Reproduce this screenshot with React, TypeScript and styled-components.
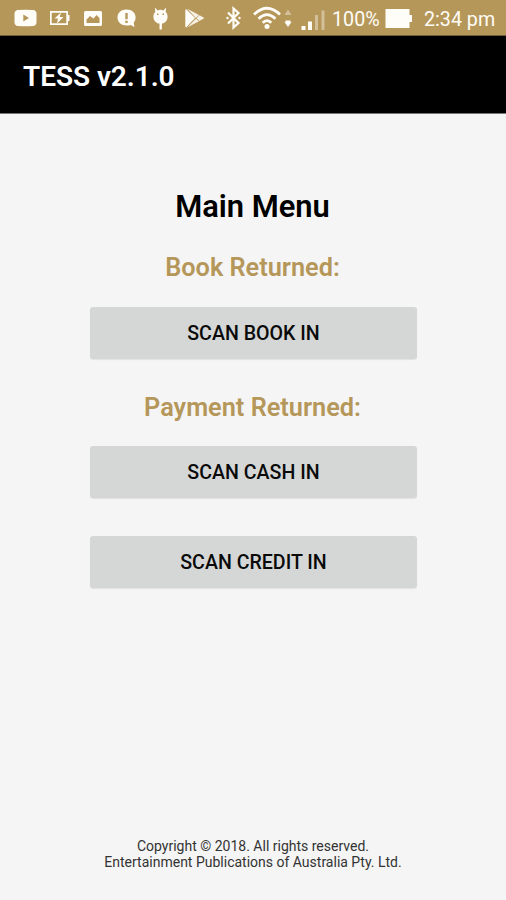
import React from "react";
import styled, { createGlobalStyle } from "styled-components";

const Global = createGlobalStyle`
  * { box-sizing: border-box; }
  body { margin: 0; background: #f5f5f5; font-family: Roboto, "Liberation Sans", sans-serif; }
`;

const Screen = styled.div`
  width: 506px;
  height: 900px;
  display: flex;
  flex-direction: column;
  background: #f5f5f5;
  overflow: hidden;
`;

const StatusBar = styled.header`
  height: 36px;
  flex: none;
  display: flex;
  align-items: center;
  background: #b6975a;
  border-bottom: 1px solid #6f5c36;
  color: #fffdf6;
`;

const Icon = styled.svg<{ $gap: number }>`
  flex: none;
  height: 36px;
  margin-left: ${(p) => p.$gap}px;
  fill: #fffdf8;
`;

const StatusText = styled.span<{ $gap: number; $width: number }>`
  flex: none;
  width: ${(p) => p.$width}px;
  margin-left: ${(p) => p.$gap}px;
  padding-top: 5px;
  font-size: 19.7px;
  line-height: 24px;
  white-space: nowrap;
`;

const AppBar = styled.div`
  height: 78px;
  flex: none;
  display: flex;
  align-items: center;
  padding: 4px 0 0 23px;
  background: #000;
  border-bottom: 1px solid #777;
`;

const AppTitle = styled.h1`
  margin: 0;
  color: #fff;
  font-size: 28px;
  line-height: 34px;
  font-weight: 600;
  letter-spacing: -0.05px;
`;

const Content = styled.main`
  flex: 1;
  display: flex;
  flex-direction: column;
  align-items: center;
  padding-top: 75px;
`;

const MenuTitle = styled.h2`
  margin: 0 1px 0 0;
  font-size: 30.9px;
  line-height: 36px;
  font-weight: 600;
  color: #000;
`;

const SectionTitle = styled.h3<{ $top: number }>`
  margin: ${(p) => p.$top}px 1px 0 0;
  font-size: 25.3px;
  line-height: 30px;
  font-weight: 600;
  color: #b6975a;
`;

const Button = styled.button<{ $top: number }>`
  width: 327px;
  height: 52px;
  flex: none;
  margin: ${(p) => p.$top}px 0 0 1px;
  padding: 1px 0 0;
  border: 0;
  border-radius: 3px;
  background: #d5d7d6;
  box-shadow: 0 1px 1px rgba(0, 0, 0, 0.08);
  color: #0a0a0a;
  font-family: inherit;
  font-size: 19.6px;
  line-height: 24px;
  font-weight: 500;
`;

const Footer = styled.footer`
  display: flex;
  flex-direction: column;
  align-items: center;
  margin-top: auto;
  padding-bottom: 30px;
  font-size: 14px;
  line-height: 16px;
  color: #333;
`;

export default function App() {
  return (
    <Screen>
      <Global />
      <StatusBar>
        <Icon $gap={14} width="23" viewBox="0 0 23 36">
          <path fillRule="evenodd" d="M4 10Q11.500 9.400 19 10Q22.500 10.300 22.500 14V22Q22.500 25.700 19 26Q11.500 26.600 4 26Q.5 25.700 .5 22V14Q.5 10.300 4 10ZM9.300 14.500V21.500L15 18Z" />
        </Icon>
        <Icon $gap={13} width="20" viewBox="0 0 20 36">
          <path fillRule="evenodd" d="M0 11H18V15H19.500V21H18V25H0ZM1.700 12.700V23.300H16.300V12.700Z" />
          <path d="M11 12.500L4.500 18.500H8L7 23.500L13.500 17H9.800Z" />
        </Icon>
        <Icon $gap={14} width="18" viewBox="0 0 18 36">
          <path fillRule="evenodd" d="M1.500 11H16.500Q18 11 18 12.500V24.500Q18 26 16.500 26H1.500Q0 26 0 24.500V12.500Q0 11 1.500 11ZM2.500 23H15.500V18L12.500 15L9.500 18.500L6 16L2.500 19.500Z" />
        </Icon>
        <Icon $gap={15} width="19" viewBox="0 0 19 36">
          <path fillRule="evenodd" d="M9.500 9.500C15 9.500 18.600 13 18.600 17.500C18.600 20 17.500 21.500 16.700 22.500L17.500 27L13.500 25C6 27 .5 23 .5 17.500C.5 13 4 9.500 9.500 9.500ZM8.300 13V19.300H10.700V13ZM8.300 20.700V23H10.700V20.700Z" />
        </Icon>
        <Icon $gap={17} width="15" viewBox="0 0 15 36">
          <path fillRule="evenodd" d="M2.500 8L4.500 10.400Q7.500 9.300 10.500 10.400L12.500 8L13.100 8.500L12.700 11.700Q14.600 13.700 14.600 16.500Q14.600 21.500 10 23.500H5Q.4 21.500 .4 16.500Q.4 13.700 2.300 11.700L1.900 8.500ZM4 13.500V15H5.500V13.500ZM9.500 13.500V15H11V13.500Z" />
          <path d="M6.500 23H8.900V29.500H6.500Z" />
        </Icon>
        <Icon $gap={17} width="20" viewBox="0 0 20 36">
          <path d="M1 9L10 18L1 27.500Q.3 27 .3 26V10.500Q.3 9.500 1 9Z" />
          <path d="M2.200 8.800L14 15L10.800 17.900ZM14.500 15.300L19.500 18L14.500 21L11.400 18.200ZM2.200 27.600L10.800 18.700L14 21.200Z" opacity=".88" />
        </Icon>
        <Icon $gap={21} width="15" viewBox="0 0 15 36">
          <path fill="none" stroke="#fffdf8" strokeWidth="2.200" d="M2 12.500L12.500 23L7.500 27.500V8.500L12.500 13L2 23.500" />
          <circle cx="1.500" cy="18" r="1.200" />
          <circle cx="13.500" cy="18" r="1.200" />
        </Icon>
        <Icon $gap={12} width="28" viewBox="0 0 28 36">
          <path fill="none" stroke="#fffdf8" strokeWidth="2.700" d="M1 14.500Q14 2 27 14.500M5.500 18.700Q14 10.500 22.500 18.700M9.700 22.800Q14 18.500 18.300 22.800" />
          <circle cx="14" cy="26.500" r="2.500" />
        </Icon>
        <Icon $gap={3} width="8" viewBox="0 0 8 36">
          <path d="M4 9.500L7.500 15H.5Z" opacity=".4" />
          <path d="M1.500 20.500H6.500V22H7.500L4 27L.5 22H1.500Z" />
        </Icon>
        <Icon $gap={9} width="24" viewBox="0 0 24 36">
          <path d="M.5 26H4.500V30H.5ZM7 21.500H11V30H7Z" />
          <path d="M14 15H17V30H14ZM20.500 10.500H23.500V30H20.500Z" opacity=".4" />
        </Icon>
        <StatusText $gap={7} $width={49}>100%</StatusText>
        <Icon $gap={4} width="28" viewBox="0 0 28 36">
          <path d="M.5 9H24.500V15H27V22H24.500V28H.5Z" />
        </Icon>
        <StatusText $gap={11} $width={74}>2:34 pm</StatusText>
      </StatusBar>
      <AppBar>
        <AppTitle>TESS v2.1.0</AppTitle>
      </AppBar>
      <Content>
        <MenuTitle>Main Menu</MenuTitle>
        <SectionTitle $top={28}>Book Returned:</SectionTitle>
        <Button $top={24}>SCAN BOOK IN</Button>
        <SectionTitle $top={34}>Payment Returned:</SectionTitle>
        <Button $top={23}>SCAN CASH IN</Button>
        <Button $top={38}>SCAN CREDIT IN</Button>
        <Footer>
          <span>Copyright © 2018. All rights reserved.</span>
          <span>Entertainment Publications of Australia Pty. Ltd.</span>
        </Footer>
      </Content>
    </Screen>
  );
}
